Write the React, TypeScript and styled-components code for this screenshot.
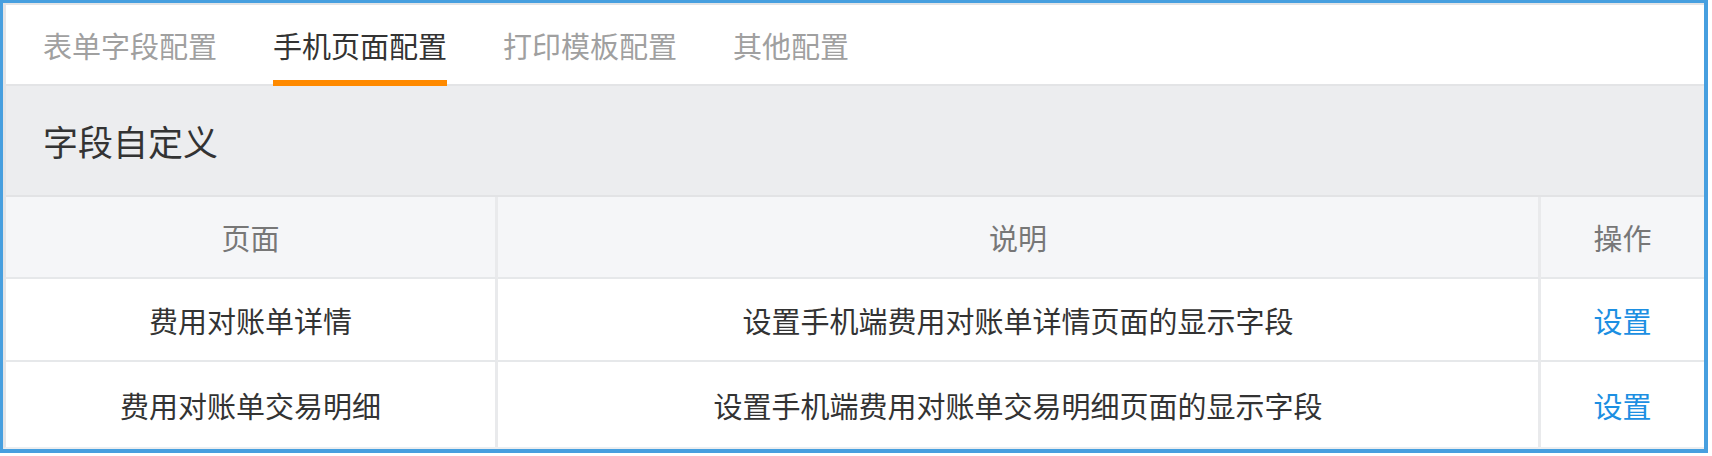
import styled, { createGlobalStyle } from "styled-components";

const GlobalStyle = createGlobalStyle`
  html, body {
    margin: 0;
    padding: 0;
    background: #ffffff;
  }
  body {
    font-family: "Noto Sans CJK SC", "Noto Sans", sans-serif;
  }
`;

const Frame = styled.div`
  width: 1708px;
  height: 453px;
  box-sizing: border-box;
  border-style: solid;
  border-color: #479fdf;
  border-width: 3px 4px 4px 3px;
  display: flex;
  flex-direction: column;
  background: #ffffff;
`;

const Panel = styled.div`
  flex: 1;
  display: flex;
  flex-direction: column;
  border-top: 2px solid #e3e4e6;
  border-left: 3px solid #e4e5e7;
  border-bottom: 2px solid #eceef0;
`;

const TabBar = styled.ul`
  list-style: none;
  margin: 0;
  padding: 0 0 0 37px;
  height: 81px;
  box-sizing: border-box;
  display: flex;
  gap: 56px;
  box-shadow: inset 0 -2px 0 #e3e4e6;
`;

const Tab = styled.li<{ $active?: boolean }>`
  box-sizing: border-box;
  padding-top: 26px;
  font-size: 29px;
  line-height: 29px;
  color: ${(p) => (p.$active ? "#333333" : "#a0a0a0")};
  border-bottom: 6px solid ${(p) => (p.$active ? "#ff8a00" : "transparent")};
  white-space: nowrap;
`;

const SectionHead = styled.div`
  height: 109px;
  display: flex;
  align-items: center;
  padding-left: 37px;
  background: #ecedef;
  border-bottom: 2px solid #e2e3e5;
  font-size: 35px;
  color: #333333;
`;

const Grid = styled.div`
  flex: 1;
  display: grid;
  grid-template-columns: 492px 1043px 1fr;
  grid-template-rows: 82px 83px 1fr;
`;

const Cell = styled.div<{ $head?: boolean; $last?: boolean; $bottom?: boolean }>`
  display: flex;
  align-items: center;
  justify-content: center;
  font-size: 29px;
  color: ${(p) => (p.$head ? "#777777" : "#333333")};
  background: ${(p) => (p.$head ? "#f5f6f8" : "#ffffff")};
  border-right: ${(p) => (p.$last ? "none" : "3px solid #e9eaec")};
  border-bottom: ${(p) => (p.$bottom ? "none" : "2px solid #e6e8ea")};
  white-space: nowrap;
`;

const Action = styled.a`
  color: #1c8fe2;
  text-decoration: none;
  cursor: pointer;
`;

const tabs = ["表单字段配置", "手机页面配置", "打印模板配置", "其他配置"];

const rows = [
  { page: "费用对账单详情", desc: "设置手机端费用对账单详情页面的显示字段" },
  { page: "费用对账单交易明细", desc: "设置手机端费用对账单交易明细页面的显示字段" },
];

const App = () => (
  <>
    <GlobalStyle />
    <Frame>
      <Panel>
        <TabBar>
          {tabs.map((t, i) => (
            <Tab key={t} $active={i === 1}>
              {t}
            </Tab>
          ))}
        </TabBar>
        <SectionHead>字段自定义</SectionHead>
        <Grid>
          <Cell $head>页面</Cell>
          <Cell $head>说明</Cell>
          <Cell $head $last>
            操作
          </Cell>
          {rows.map((r, i) => {
            const bottom = i === rows.length - 1;
            return [
              <Cell key={r.page + "p"} $bottom={bottom}>
                {r.page}
              </Cell>,
              <Cell key={r.page + "d"} $bottom={bottom}>
                {r.desc}
              </Cell>,
              <Cell key={r.page + "a"} $bottom={bottom} $last>
                <Action>设置</Action>
              </Cell>,
            ];
          })}
        </Grid>
      </Panel>
    </Frame>
  </>
);

export default App;
